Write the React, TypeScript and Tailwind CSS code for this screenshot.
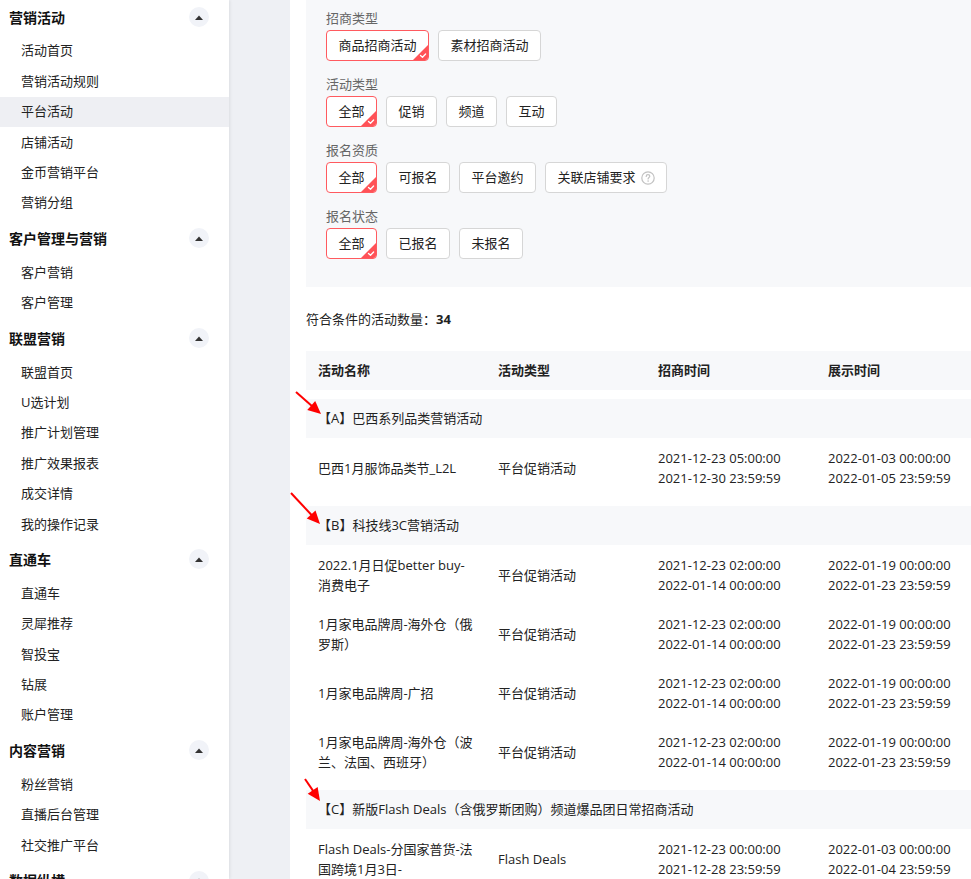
import React from "react";

const FONT = { fontFamily: '"Open Sans", "Noto Sans CJK SC", sans-serif' };

const sections: { title: string; items: string[] }[] = [
  { title: "营销活动", items: ["活动首页", "营销活动规则", "平台活动", "店铺活动", "金币营销平台", "营销分组"] },
  { title: "客户管理与营销", items: ["客户营销", "客户管理"] },
  { title: "联盟营销", items: ["联盟首页", "U选计划", "推广计划管理", "推广效果报表", "成交详情", "我的操作记录"] },
  { title: "直通车", items: ["直通车", "灵犀推荐", "智投宝", "钻展", "账户管理"] },
  { title: "内容营销", items: ["粉丝营销", "直播后台管理", "社交推广平台"] },
  { title: "数据纵横", items: ["商品分析", "店铺分析"] },
];

function Chevron() {
  return (
    <span className="flex h-5 w-5 items-center justify-center rounded-full bg-[#f1f3f8]">
      <svg width="8" height="5" viewBox="0 0 8 5">
        <path d="M0 5 L4 0.5 L8 5 Z" fill="#333" />
      </svg>
    </span>
  );
}

function Sidebar() {
  return (
    <div className="relative z-10 w-[229px] shrink-0 bg-white shadow-[1px_0_3px_rgba(0,0,0,0.08)]">
      {sections.map((s) => (
        <div key={s.title} className="pb-[3px]">
          <div className="flex h-[34px] items-center justify-between pl-[9px] pr-[20px]">
            <span className="text-[14px] font-bold text-[#111]">{s.title}</span>
            <Chevron />
          </div>
          <div className="pt-[2px]">
            {s.items.map((it) => (
              <div
                key={it}
                className={
                  "flex h-[30.4px] items-center pl-[21px] text-[13px] text-[#222] " +
                  (it === "平台活动" ? "bg-[#eeeff3]" : "")
                }
              >
                {it}
              </div>
            ))}
          </div>
        </div>
      ))}
    </div>
  );
}

function Check() {
  return (
    <span className="absolute bottom-0 right-0 h-[15px] w-[15px] overflow-hidden rounded-br-[3px]">
      <svg width="15" height="15" viewBox="0 0 15 15" className="absolute bottom-0 right-0">
        <path d="M15 0 L15 15 L0 15 Z" fill="#ff5257" />
        <path d="M7.5 10.5 L9.5 12.3 L12.6 9" stroke="#fff" strokeWidth="1.3" fill="none" strokeLinecap="round" strokeLinejoin="round" />
      </svg>
    </span>
  );
}

function Btn({ label, active, help }: { label: string; active?: boolean; help?: boolean }) {
  return (
    <div
      className={
        "relative flex h-[31px] items-center gap-[5px] rounded-[4px] border bg-white px-[11.5px] text-[13px] text-[#222] " +
        (active ? "border-[#ff5a5f]" : "border-[#d6d6d6]")
      }
    >
      {label}
      {help && (
        <svg width="14" height="14" viewBox="0 0 14 14">
          <circle cx="7" cy="7" r="6.2" stroke="#c2c2c2" strokeWidth="1.2" fill="none" />
          <path d="M5.2 5.4 C5.2 4.3 6 3.7 7 3.7 C8 3.7 8.8 4.3 8.8 5.3 C8.8 6.5 7.1 6.6 7.1 7.9" stroke="#c2c2c2" strokeWidth="1.2" fill="none" strokeLinecap="round" />
          <circle cx="7.1" cy="10.1" r="0.8" fill="#c2c2c2" />
        </svg>
      )}
      {active && <Check />}
    </div>
  );
}

const filters: { label: string; opts: string[]; help?: string }[] = [
  { label: "招商类型", opts: ["商品招商活动", "素材招商活动"] },
  { label: "活动类型", opts: ["全部", "促销", "频道", "互动"] },
  { label: "报名资质", opts: ["全部", "可报名", "平台邀约", "关联店铺要求"], help: "关联店铺要求" },
  { label: "报名状态", opts: ["全部", "已报名", "未报名"] },
];

type Row = { name: string[]; type: string; rec: [string, string]; show: [string, string] };
const groups: { title: string; rows: Row[] }[] = [
  {
    title: "【A】巴西系列品类营销活动",
    rows: [
      { name: ["巴西1月服饰品类节_L2L"], type: "平台促销活动", rec: ["2021-12-23 05:00:00", "2021-12-30 23:59:59"], show: ["2022-01-03 00:00:00", "2022-01-05 23:59:59"] },
    ],
  },
  {
    title: "【B】科技线3C营销活动",
    rows: [
      { name: ["2022.1月日促better buy-", "消费电子"], type: "平台促销活动", rec: ["2021-12-23 02:00:00", "2022-01-14 00:00:00"], show: ["2022-01-19 00:00:00", "2022-01-23 23:59:59"] },
      { name: ["1月家电品牌周-海外仓（俄", "罗斯）"], type: "平台促销活动", rec: ["2021-12-23 02:00:00", "2022-01-14 00:00:00"], show: ["2022-01-19 00:00:00", "2022-01-23 23:59:59"] },
      { name: ["1月家电品牌周-广招"], type: "平台促销活动", rec: ["2021-12-23 02:00:00", "2022-01-14 00:00:00"], show: ["2022-01-19 00:00:00", "2022-01-23 23:59:59"] },
      { name: ["1月家电品牌周-海外仓（波", "兰、法国、西班牙）"], type: "平台促销活动", rec: ["2021-12-23 02:00:00", "2022-01-14 00:00:00"], show: ["2022-01-19 00:00:00", "2022-01-23 23:59:59"] },
    ],
  },
  {
    title: "【C】新版Flash Deals（含俄罗斯团购）频道爆品团日常招商活动",
    rows: [
      { name: ["Flash Deals-分国家普货-法", "国跨境1月3日-"], type: "Flash Deals", rec: ["2021-12-23 00:00:00", "2021-12-28 23:59:59"], show: ["2022-01-03 00:00:00", "2022-01-04 23:59:59"] },
    ],
  },
];

function Arrow({ x1, y1, x2, y2 }: { x1: number; y1: number; x2: number; y2: number }) {
  const dx = x2 - x1;
  const dy = y2 - y1;
  const len = Math.sqrt(dx * dx + dy * dy);
  const ux = dx / len;
  const uy = dy / len;
  const hl = 13;
  const hw = 6;
  const bx = x2 - ux * hl;
  const by = y2 - uy * hl;
  const p1 = `${bx - uy * hw},${by + ux * hw}`;
  const p2 = `${bx + uy * hw},${by - ux * hw}`;
  return (
    <svg className="pointer-events-none absolute left-0 top-0" width="971" height="879">
      <line x1={x1} y1={y1} x2={bx + ux * 2} y2={by + uy * 2} stroke="#f00" strokeWidth="2" />
      <polygon points={`${x2},${y2} ${p1} ${p2}`} fill="#f00" />
    </svg>
  );
}

export default function App() {
  return (
    <div className="relative flex h-[879px] w-[971px] overflow-hidden bg-white text-[#222]" style={FONT}>
      <Sidebar />
      <div className="w-[61px] shrink-0 bg-[#eef0f4]" />
      <div className="flex-1 overflow-hidden bg-white pl-4">
        <div className="w-[760px]">
          <div className="bg-[#f7f8fa] pb-[28px] pl-[20px] pt-[8px]">
            {filters.map((f) => (
              <div key={f.label} className="mb-[13px] last:mb-0">
                <div className="h-[20px] text-[13px] leading-[20px] text-[#666]">{f.label}</div>
                <div className="mt-[2px] flex gap-[9px]">
                  {f.opts.map((o, i) => (
                    <Btn key={o} label={o} active={i === 0} help={f.help === o} />
                  ))}
                </div>
              </div>
            ))}
          </div>
          <div className="mt-[22px] text-[13px] leading-[20px] text-[#222]">
            符合条件的活动数量：<span className="font-bold">34</span>
          </div>
          <div className="mt-[22px]">
            <div className="flex h-[39px] items-center bg-[#f7f8fa] text-[13px] font-semibold text-[#222]">
              <div className="w-[180px] pl-3">活动名称</div>
              <div className="w-[160px] pl-3">活动类型</div>
              <div className="w-[170px] pl-3">招商时间</div>
              <div className="w-[170px] pl-3">展示时间</div>
              <div className="pl-3">操作</div>
            </div>
            {groups.map((g) => (
              <div key={g.title} className="mt-[9px]">
                <div className="flex h-[39px] items-center bg-[#f7f8fa] pl-[12px] text-[13px] text-[#222]">{g.title}</div>
                {g.rows.map((r, i) => (
                  <div key={i} className="flex h-[59px] items-center text-[13px] leading-[20px] text-[#222]">
                    <div className="w-[180px] whitespace-nowrap pl-3">
                      {r.name.map((n) => (
                        <div key={n}>{n}</div>
                      ))}
                    </div>
                    <div className="w-[160px] pl-3">{r.type}</div>
                    <div className="w-[170px] whitespace-nowrap pl-3">
                      <div>{r.rec[0]}</div>
                      <div>{r.rec[1]}</div>
                    </div>
                    <div className="w-[170px] whitespace-nowrap pl-3">
                      <div>{r.show[0]}</div>
                      <div>{r.show[1]}</div>
                    </div>
                  </div>
                ))}
              </div>
            ))}
          </div>
        </div>
      </div>
      <Arrow x1={296} y1={392} x2={321} y2={414} />
      <Arrow x1={291} y1={493} x2={320} y2={524} />
      <Arrow x1={305} y1={779} x2={320} y2={801} />
    </div>
  );
}
